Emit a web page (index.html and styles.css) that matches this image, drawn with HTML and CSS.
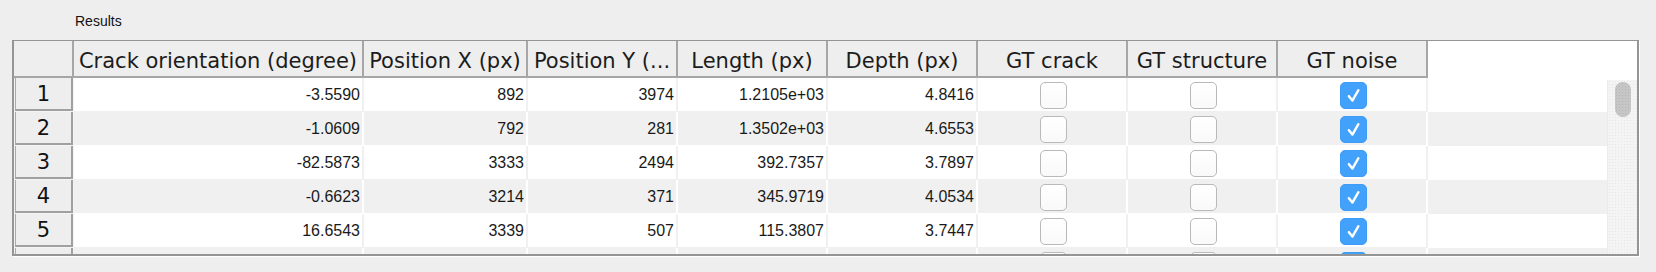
FILE: index.html
```html
<!DOCTYPE html>
<html>
<head>
<meta charset="utf-8">
<link rel="stylesheet" href="styles.css">
</head>
<body>
<div class="caption">Results</div>
<div class="frame">
  <div class="thead">
    <div class="th corner"></div>
    <div class="th">Crack orientation (degree)</div>
    <div class="th">Position X (px)</div>
    <div class="th">Position Y (...</div>
    <div class="th">Length (px)</div>
    <div class="th">Depth (px)</div>
    <div class="th">GT crack</div>
    <div class="th">GT structure</div>
    <div class="th">GT noise</div>
  </div>
  <div class="body">
    <div class="rows">
      <div class="row odd">
        <div class="rhc"><div class="rh">1</div></div>
        <div class="td">-3.5590</div><div class="td">892</div><div class="td">3974</div><div class="td">1.2105e+03</div><div class="td">4.8416</div>
        <div class="td cb"><span class="box"></span></div>
        <div class="td cb"><span class="box"></span></div>
        <div class="td cb"><span class="box on"><svg viewBox="0 0 27 27"><path d="M8.5 14.2 L12.3 19 L18.8 7.8"/></svg></span></div>
      </div>
      <div class="row even">
        <div class="rhc"><div class="rh">2</div></div>
        <div class="td">-1.0609</div><div class="td">792</div><div class="td">281</div><div class="td">1.3502e+03</div><div class="td">4.6553</div>
        <div class="td cb"><span class="box"></span></div>
        <div class="td cb"><span class="box"></span></div>
        <div class="td cb"><span class="box on"><svg viewBox="0 0 27 27"><path d="M8.5 14.2 L12.3 19 L18.8 7.8"/></svg></span></div>
      </div>
      <div class="row odd">
        <div class="rhc"><div class="rh">3</div></div>
        <div class="td">-82.5873</div><div class="td">3333</div><div class="td">2494</div><div class="td">392.7357</div><div class="td">3.7897</div>
        <div class="td cb"><span class="box"></span></div>
        <div class="td cb"><span class="box"></span></div>
        <div class="td cb"><span class="box on"><svg viewBox="0 0 27 27"><path d="M8.5 14.2 L12.3 19 L18.8 7.8"/></svg></span></div>
      </div>
      <div class="row even">
        <div class="rhc"><div class="rh">4</div></div>
        <div class="td">-0.6623</div><div class="td">3214</div><div class="td">371</div><div class="td">345.9719</div><div class="td">4.0534</div>
        <div class="td cb"><span class="box"></span></div>
        <div class="td cb"><span class="box"></span></div>
        <div class="td cb"><span class="box on"><svg viewBox="0 0 27 27"><path d="M8.5 14.2 L12.3 19 L18.8 7.8"/></svg></span></div>
      </div>
      <div class="row odd">
        <div class="rhc"><div class="rh">5</div></div>
        <div class="td">16.6543</div><div class="td">3339</div><div class="td">507</div><div class="td">115.3807</div><div class="td">3.7447</div>
        <div class="td cb"><span class="box"></span></div>
        <div class="td cb"><span class="box"></span></div>
        <div class="td cb"><span class="box on"><svg viewBox="0 0 27 27"><path d="M8.5 14.2 L12.3 19 L18.8 7.8"/></svg></span></div>
      </div>
      <div class="row even">
        <div class="rhc"><div class="rh"></div></div>
        <div class="td"></div><div class="td"></div><div class="td"></div><div class="td"></div><div class="td"></div>
        <div class="td cb"><span class="box"></span></div>
        <div class="td cb"><span class="box"></span></div>
        <div class="td cb"><span class="box on"><svg viewBox="0 0 27 27"><path d="M8.5 14.2 L12.3 19 L18.8 7.8"/></svg></span></div>
      </div>
    </div>
    <div class="vscroll"><div class="thumb"></div></div>
  </div>
</div>
</body>
</html>
```
FILE: styles.css
```css
html, body {
  margin: 0;
  padding: 0;
  background: #eeeeee;
}
body {
  width: 1656px;
  height: 272px;
  overflow: hidden;
  font-family: "Liberation Sans", Arial, sans-serif;
  color: #1a1a1a;
}
.caption {
  box-sizing: border-box;
  height: 40px;
  padding: 13px 0 0 75px;
  font-size: 14px;
  line-height: 16px;
  color: #111;
}
.frame {
  box-sizing: border-box;
  margin-left: 12px;
  width: 1627px;
  height: 216px;
  border-style: solid;
  border-color: #959595;
  border-width: 1px 2px 2px 2px;
  box-shadow: 1px 1px 0 #ffffff;
  background: #ffffff;
  display: flex;
  flex-direction: column;
  overflow: hidden;
}
.thead {
  display: grid;
  grid-template-columns: 60px 290px 164px repeat(6, 150px);
  height: 37px;
  flex: none;
  background: #ffffff;
}
.th {
  box-sizing: border-box;
  background: #eeeeee;
  border-right: 2px solid #a6a6a6;
  border-bottom: 2px solid #a6a6a6;
  font-family: "DejaVu Sans", sans-serif;
  font-size: 21px;
  padding-top: 5px;
  line-height: 30px;
  text-align: center;
  white-space: nowrap;
  overflow: hidden;
  color: #1c1c1c;
}
.body {
  flex: 1;
  display: flex;
  min-height: 0;
}
.rows {
  flex: 1;
  overflow: hidden;
  background: #ffffff;
}
.row {
  display: grid;
  grid-template-columns: 60px 290px 164px repeat(6, 150px);
  height: 34px;
}
.row.even { background: #f0f0f0; }
.rhc {
  background: #f4f4f4;
}
.rh {
  box-sizing: border-box;
  height: 33px;
  margin: 0 1px 1px 1px;
  padding-top: 2px;
  background: #eeeeee;
  border-left: 1px solid #a9a9a9;
  border-right: 2px solid #a0a0a0;
  border-bottom: 2px solid #a0a0a0;
  font-family: "DejaVu Sans", sans-serif;
  font-size: 21px;
  line-height: 29px;
  text-align: center;
  color: #111;
}
.td {
  box-sizing: border-box;
  border-right: 2px solid #f0f0f0;
  border-bottom: 1px solid #f0f0f0;
  padding-right: 2px;
  text-align: right;
  font-size: 16px;
  line-height: 34px;
  white-space: nowrap;
  overflow: hidden;
}
.row.even .td {
  border-right-color: #ffffff;
  border-bottom-color: #ffffff;
}
.td.cb {
  display: flex;
  justify-content: center;
  align-items: flex-start;
  padding: 4px 0 0 2px;
}
.box {
  box-sizing: border-box;
  width: 27px;
  height: 27px;
  border: 1px solid #b9b9b9;
  border-radius: 5px;
  background: linear-gradient(#ffffff, #f9f9f9);
  display: block;
}
.box.on {
  border-color: #3e9cf7;
  background: #42a1fb;
}
.box svg {
  display: block;
  width: 25px;
  height: 25px;
}
.box svg path {
  fill: none;
  stroke: #ffffff;
  stroke-width: 2.6;
  stroke-linecap: round;
  stroke-linejoin: round;
}
.vscroll {
  flex: none;
  box-sizing: border-box;
  width: 30px;
  margin-top: 2px;
  background-color: #f4f4f4;
  background-image: radial-gradient(#e6e6e6 0.6px, transparent 0.8px);
  background-size: 3px 3px;
  border-left: 1px solid #ebebeb;
}
.thumb {
  width: 16px;
  height: 35px;
  margin: 2px 0 0 7px;
  border-radius: 8px;
  background-color: #c6c6c6;
  background-image: radial-gradient(#b6b6b6 0.6px, transparent 0.8px);
  background-size: 3px 3px;
}
```
